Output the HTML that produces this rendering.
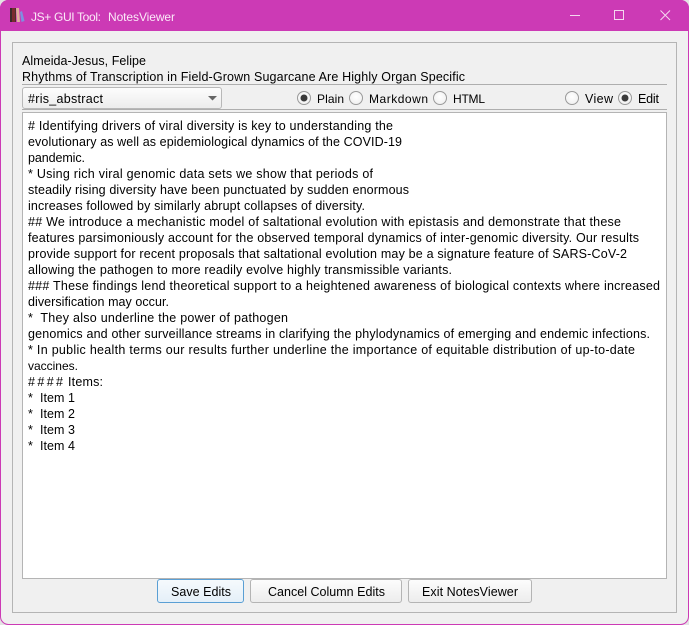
<!DOCTYPE html>
<html><head><meta charset="utf-8"><title>JS+ GUI Tool: NotesViewer</title>
<style>
html,body{margin:0;padding:0;width:689px;height:625px;overflow:hidden;background:#e4e4e4}
svg{display:block}
text{font-family:"Liberation Sans",Arial,sans-serif;font-size:12.5px;fill:#000;white-space:pre}
.s{font-size:12px}
.w{fill:#fbeaf8;font-size:12px}
</style></head><body>
<svg width="689" height="625" viewBox="0 0 689 625" xmlns="http://www.w3.org/2000/svg">
<defs>
<linearGradient id="btn" x1="0" y1="0" x2="0" y2="1"><stop offset="0" stop-color="#fdfdfd"/><stop offset="1" stop-color="#ececec"/></linearGradient>
<linearGradient id="btnf" x1="0" y1="0" x2="0" y2="1"><stop offset="0" stop-color="#f6fafd"/><stop offset="1" stop-color="#e4eff8"/></linearGradient>
<radialGradient id="rad" cx="0.5" cy="0.4" r="0.6"><stop offset="0" stop-color="#ffffff"/><stop offset="1" stop-color="#f0f0f0"/></radialGradient>
</defs>
<rect x="0.5" y="0.5" width="688" height="624" rx="8" fill="#f0f0f0" stroke="#cc3ab5"/>
<path d="M0 31V8a8 8 0 0 1 8-8H681a8 8 0 0 1 8 8V31Z" fill="#cc3ab5"/>
<rect x="10" y="8" width="2" height="14" fill="#3a2a2a"/>
<rect x="12" y="8" width="3" height="14" fill="#7a2a30"/>
<rect x="15" y="8" width="1" height="14" fill="#4a3030"/>
<path d="M16 8h3l1 14h-3z" fill="#dfae9c"/>
<path d="M20 12l2-1 2.5 10-3 1z" fill="#7f8fe0"/>
<text x="31" y="21" class="w" textLength="70" lengthAdjust="spacing">JS+ GUI Tool:</text>
<text x="108" y="21" class="w" textLength="67" lengthAdjust="spacing">NotesViewer</text>
<path d="M570 15.5H580" stroke="#f4d8ef" stroke-width="1"/>
<rect x="614.5" y="10.5" width="9" height="9" fill="none" stroke="#f4d8ef" stroke-width="1"/>
<path d="M660.5 10.5L670 20M670 10.5L660.5 20" stroke="#f4d8ef" stroke-width="1" fill="none"/>
<rect x="12.5" y="42.5" width="664" height="570" fill="#f0f0f0" stroke="#b4b4b4"/>
<text x="22" y="65" textLength="124" lengthAdjust="spacing">Almeida-Jesus, Felipe</text>
<text x="22" y="81" textLength="443" lengthAdjust="spacing">Rhythms of Transcription in Field-Grown Sugarcane Are Highly Organ Specific</text>
<path d="M22 84.5H667M22 109.5H667" stroke="#aeaeae"/>
<rect x="22.5" y="87.5" width="199" height="21" rx="2.5" fill="url(#btn)" stroke="#b8b8b8"/>
<text x="28" y="103" textLength="75" lengthAdjust="spacing">#ris_abstract</text>
<path d="M208 96h9l-4.5 4.5z" fill="#666"/>
<g fill="url(#rad)" stroke="#9a9a9a">
<circle cx="304" cy="98" r="6.5"/><circle cx="356" cy="98" r="6.5"/><circle cx="440" cy="98" r="6.5"/><circle cx="572" cy="98" r="6.5"/><circle cx="625" cy="98" r="6.5"/>
</g>
<circle cx="304" cy="98" r="3.5" fill="#3a3a3a"/><circle cx="625" cy="98" r="3.5" fill="#3a3a3a"/>
<text x="317" y="103" class="s" textLength="27" lengthAdjust="spacing">Plain</text>
<text x="369" y="103" class="s" textLength="59" lengthAdjust="spacing">Markdown</text>
<text x="453" y="103" class="s" textLength="32" lengthAdjust="spacing">HTML</text>
<text x="585" y="103" textLength="28" lengthAdjust="spacing">View</text>
<text x="638" y="103" textLength="21" lengthAdjust="spacing">Edit</text>
<rect x="22.5" y="112.5" width="644" height="466" fill="#fff" stroke="#b4b4b4"/>
<g>
<text x="28" y="130" textLength="365" lengthAdjust="spacing"># Identifying drivers of viral diversity is key to understanding the</text>
<text x="28" y="146" textLength="374" lengthAdjust="spacing">evolutionary as well as epidemiological dynamics of the COVID-19</text>
<text x="28" y="162" textLength="57" lengthAdjust="spacing">pandemic.</text>
<text x="28" y="178" textLength="345" lengthAdjust="spacing">* Using rich viral genomic data sets we show that periods of</text>
<text x="28" y="194" textLength="381" lengthAdjust="spacing">steadily rising diversity have been punctuated by sudden enormous</text>
<text x="28" y="210" textLength="337" lengthAdjust="spacing">increases followed by similarly abrupt collapses of diversity.</text>
<text x="28" y="226" textLength="593" lengthAdjust="spacing">## We introduce a mechanistic model of saltational evolution with epistasis and demonstrate that these</text>
<text x="28" y="242" textLength="611" lengthAdjust="spacing">features parsimoniously account for the observed temporal dynamics of inter-genomic diversity. Our results</text>
<text x="28" y="258" textLength="599" lengthAdjust="spacing">provide support for recent proposals that saltational evolution may be a signature feature of SARS-CoV-2</text>
<text x="28" y="274" textLength="424" lengthAdjust="spacing">allowing the pathogen to more readily evolve highly transmissible variants.</text>
<text x="28" y="290" textLength="632" lengthAdjust="spacing">### These findings lend theoretical support to a heightened awareness of biological contexts where increased</text>
<text x="28" y="306" textLength="141" lengthAdjust="spacing">diversification may occur.</text>
<text x="28" y="322" textLength="260" lengthAdjust="spacing">*  They also underline the power of pathogen</text>
<text x="28" y="338" textLength="622" lengthAdjust="spacing">genomics and other surveillance streams in clarifying the phylodynamics of emerging and endemic infections.</text>
<text x="28" y="354" textLength="607" lengthAdjust="spacing">* In public health terms our results further underline the importance of equitable distribution of up-to-date</text>
<text x="28" y="370" class="s" textLength="50" lengthAdjust="spacing">vaccines.</text>
<text x="28" y="386" textLength="35" lengthAdjust="spacing">####</text><text x="68" y="386" textLength="35" lengthAdjust="spacing">Items:</text>
<text x="28" y="402">*</text><text x="40" y="402" textLength="35" lengthAdjust="spacing">Item 1</text>
<text x="28" y="418">*</text><text x="40" y="418" textLength="35" lengthAdjust="spacing">Item 2</text>
<text x="28" y="434">*</text><text x="40" y="434" textLength="35" lengthAdjust="spacing">Item 3</text>
<text x="28" y="450">*</text><text x="40" y="450" textLength="35" lengthAdjust="spacing">Item 4</text>
</g>
<rect x="157.5" y="579.5" width="86" height="23" rx="2.5" fill="url(#btnf)" stroke="#5a9fd4"/>
<text x="171" y="596" textLength="60" lengthAdjust="spacing">Save Edits</text>
<rect x="250.5" y="579.5" width="151" height="23" rx="2.5" fill="url(#btn)" stroke="#b4b4b4"/>
<text x="268" y="596" textLength="117" lengthAdjust="spacing">Cancel Column Edits</text>
<rect x="408.5" y="579.5" width="123" height="23" rx="2.5" fill="url(#btn)" stroke="#b4b4b4"/>
<text x="422" y="596" textLength="96" lengthAdjust="spacing">Exit NotesViewer</text>
</svg>
</body></html>
